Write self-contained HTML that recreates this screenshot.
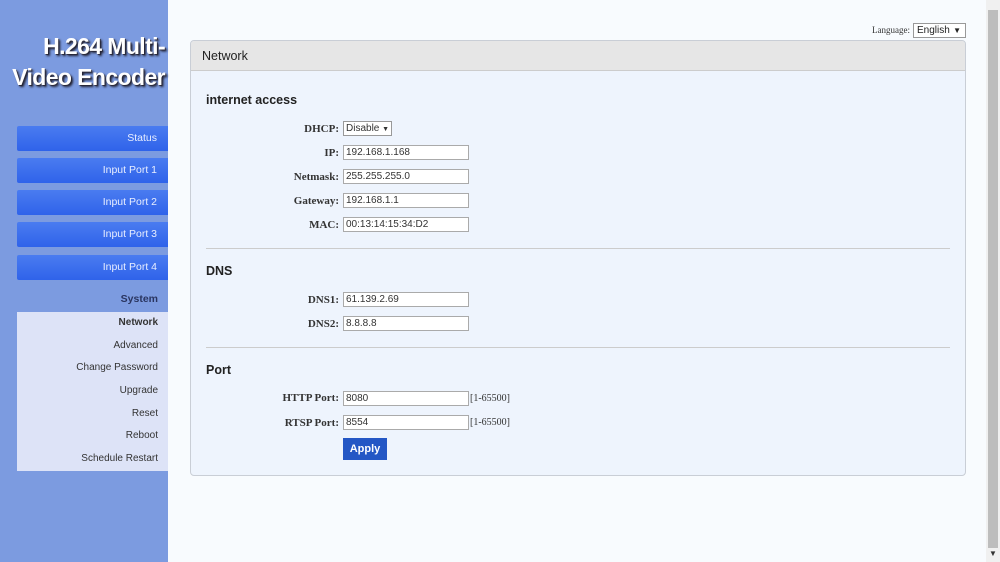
<!DOCTYPE html>
<html><head><style>
body{margin:0;width:1000px;height:562px;background:#f8fbfe;font-family:"Liberation Sans",sans-serif;position:relative;overflow:hidden}
.sb{position:absolute;left:0;top:0;width:168px;height:562px;background:#7c9be0}
.logo{position:absolute;left:0;width:165px;text-align:right;color:#fff;font-weight:bold;font-size:23px;line-height:31px;top:31px;text-shadow:2px 2px 2px #223,1px 1px 0 #445;letter-spacing:-0.6px}
.btn{position:absolute;left:17px;width:151px;height:25px;background:linear-gradient(#4a7cf0,#2f63ea);color:#e8eeff;font-size:10.5px;text-align:right;box-sizing:border-box;padding-right:11px;line-height:25px;border-radius:2px 0 0 2px}
.sys{position:absolute;left:17px;width:141px;text-align:right;top:293px;font-size:10.5px;font-weight:bold;color:#2a3560}
.menu{position:absolute;left:17px;top:312px;width:151px;height:159px;background:#dde3f7}
.menu div{text-align:right;padding-right:10px;font-size:10px;color:#333;height:22.7px;line-height:22px}
.panel{position:absolute;left:190px;top:40px;width:774px;height:434px;border:1px solid #c9ced6;border-radius:4px;background:#eef4fd;overflow:hidden}
.ph{height:29px;background:#e6e6e6;border-bottom:1px solid #ccc;font-size:12.5px;color:#222;padding-left:11px;line-height:30px}
h3{position:absolute;margin:0;font-size:12.5px;font-weight:bold;color:#222;left:15px}
.lbl{position:absolute;width:148px;left:0;text-align:right;font-family:"Liberation Serif",serif;font-weight:bold;font-size:11px;color:#333}
.inp{position:absolute;left:152px;width:122px;height:13px;border:1px solid #aaa;background:#fff;font-size:10px;color:#333;line-height:13px;padding-left:2px}
.hr{position:absolute;left:15px;width:744px;height:1px;background:#ccc}
.rng{position:absolute;left:279px;font-family:"Liberation Serif",serif;font-size:10px;color:#333}
</style></head><body>
<div class="sb">
<div class="logo">H.264 Multi-<br>Video Encoder</div>
<div class="btn" style="top:126px">Status</div>
<div class="btn" style="top:158px">Input Port 1</div>
<div class="btn" style="top:190px">Input Port 2</div>
<div class="btn" style="top:222px">Input Port 3</div>
<div class="btn" style="top:255px">Input Port 4</div>
<div class="sys">System</div>
<div class="menu"><div style="font-weight:bold">Network</div><div>Advanced</div><div>Change Password</div><div>Upgrade</div><div>Reset</div><div>Reboot</div><div>Schedule Restart</div></div>
</div>
<div style="position:absolute;left:872px;top:25px;font-family:'Liberation Serif',serif;font-size:9px;color:#333">Language:</div>
<div style="position:absolute;left:913px;top:23px;width:48px;height:13px;border:1px solid #999;background:#fff;font-size:10px;line-height:13px;padding-left:3px;color:#222">English <span style="position:absolute;right:4px;font-size:8px">▼</span></div>
<div class="panel">
<div class="ph">Network</div>
<h3 style="top:52px">internet access</h3>
<div class="lbl" style="top:82px">DHCP:</div>
<div class="inp" style="top:80px;width:45px;border-color:#999">Disable <span style="font-size:7px">▼</span></div>
<div class="lbl" style="top:106px">IP:</div><div class="inp" style="top:104px">192.168.1.168</div>
<div class="lbl" style="top:130px">Netmask:</div><div class="inp" style="top:128px">255.255.255.0</div>
<div class="lbl" style="top:154px">Gateway:</div><div class="inp" style="top:152px">192.168.1.1</div>
<div class="lbl" style="top:178px">MAC:</div><div class="inp" style="top:176px">00:13:14:15:34:D2</div>
<div class="hr" style="top:207px"></div>
<h3 style="top:223px">DNS</h3>
<div class="lbl" style="top:253px">DNS1:</div><div class="inp" style="top:251px">61.139.2.69</div>
<div class="lbl" style="top:277px">DNS2:</div><div class="inp" style="top:275px">8.8.8.8</div>
<div class="hr" style="top:306px"></div>
<h3 style="top:322px">Port</h3>
<div class="lbl" style="top:351px">HTTP Port:</div><div class="inp" style="top:350px">8080</div><div class="rng" style="top:352px">[1-65500]</div>
<div class="lbl" style="top:376px">RTSP Port:</div><div class="inp" style="top:374px">8554</div><div class="rng" style="top:376px">[1-65500]</div>
<div style="position:absolute;left:152px;top:397px;width:44px;height:22px;background:#2457c5;color:#fff;font-weight:bold;font-size:11px;text-align:center;line-height:22px">Apply</div>
</div>
<div style="position:absolute;left:986px;top:0;width:14px;height:562px;background:#f0f0f0"></div>
<div style="position:absolute;left:988px;top:10px;width:10px;height:538px;background:#bdbdbd"></div>
<div style="position:absolute;left:989px;top:549px;font-size:8px;color:#333">▼</div>
</body></html>
